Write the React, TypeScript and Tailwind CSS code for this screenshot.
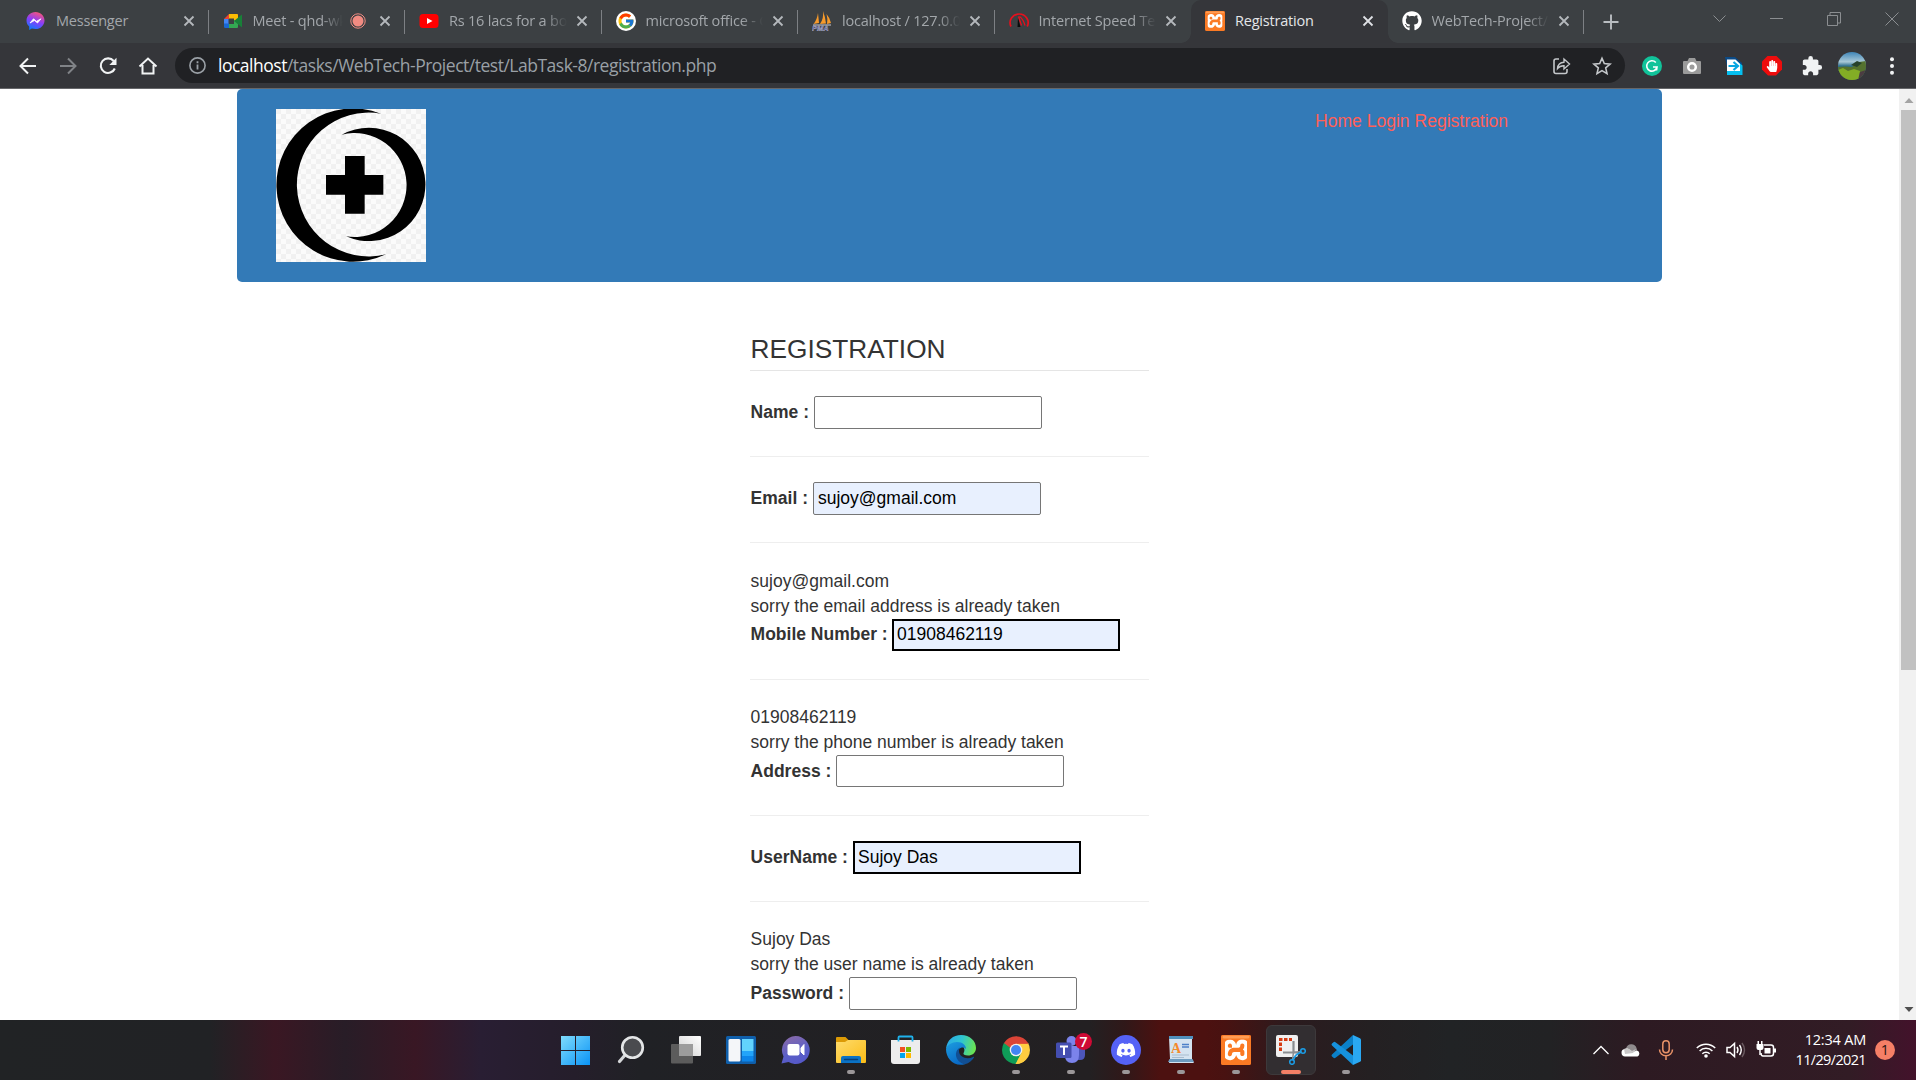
import React from "react";
import { FcGoogle } from "react-icons/fc";
import { SiXampp } from "react-icons/si";
import { FaDiscord, FaGithub, FaHandPaper } from "react-icons/fa";
import { MdExtension } from "react-icons/md";

type SvgProps = { w: number; h: number; vb?: string; className?: string; children: React.ReactNode };

function Svg({ w, h, vb, className, children }: SvgProps) {
  return (
    <svg width={w} height={h} viewBox={vb ?? `0 0 ${w} ${h}`} fill="none" className={"block shrink-0 " + (className ?? "")}>
      {children}
    </svg>
  );
}

function Messenger() {
  return (
    <Svg w={20} h={20}>
      <defs>
        <linearGradient id="msg" x1="0.3" y1="1" x2="0.7" y2="0">
          <stop offset="0" stopColor="#0a7cff" />
          <stop offset="0.5" stopColor="#8a3dfa" />
          <stop offset="1" stopColor="#fa5577" />
        </linearGradient>
      </defs>
      <path d="M9.500 1C4.500 1 0.500 4.700 0.500 9.500c0 2.500 1 4.600 2.700 6.100V19l2.600-1.400c1.200.3 2.400.5 3.700.5 5 0 9-3.800 9-8.600S14.500 1 9.500 1z" fill="url(#msg)" />
      <path d="M4 12 7.500 7.800l3 2.500 4.500-2.500L11.500 12l-3-2.500z" fill="#fff" stroke="#fff" strokeWidth="0.800" />
    </Svg>
  );
}

function Meet() {
  return (
    <Svg w={20} h={20}>
      <path d="M1 8l5-5v5z" fill="#ea4335" />
      <path d="M1 8h4.500v5H1z" fill="#4285f4" />
      <path d="M1 12.500h5V17H2.300Q1 17 1 15.700z" fill="#1967d2" />
      <path d="M6 3h8.200Q15 3 15 4v5l-4 2V7.500H6z" fill="#fbbc04" />
      <path d="M6 13h5V9l4 1.500V16q0 1-1 1H6z" fill="#34a853" />
      <path d="M11 10l7.500-6.200q.5-.3.500.5v11.400q0 .8-.6.400z" fill="#188038" />
    </Svg>
  );
}

function YouTube() {
  return (
    <Svg w={20} h={20}>
      <rect x="0.500" y="3" width="19" height="14" rx="3.500" fill="#f00" />
      <path d="M8 7l5.500 3L8 13z" fill="#fff" />
    </Svg>
  );
}

function PhpMyAdmin() {
  return (
    <Svg w={20} h={20}>
      <path d="M6 2q-1 7-4.500 11L7 12zM11 0q1 7-3 13l6-.5Q13 5 11 0zM14.500 3q1.500 5 .5 10l4-1q-1-5-4.500-9z" fill="#f79a2b" />
      <path d="M1 14h18" stroke="#c8c9d8" />
      <text x="0" y="20" fontSize="7.500" fontWeight="700" fontStyle="italic" fontFamily="Liberation Sans, sans-serif" fill="#4b4b8c" stroke="#c9c9dc" strokeWidth="0.350">PMA</text>
    </Svg>
  );
}

function Speed() {
  return (
    <Svg w={20} h={20}>
      <path d="M2 15.500A9 8.700 0 1 1 18.200 15.500" stroke="#e5101d" strokeWidth="1.700" />
      <path d="M9 6.500l2.500 9.500H8.500z" fill="#0c0c0c" />
      <path d="M9.500 5.500l3 9M10.500 5.500q4 3 5.500 9" stroke="#e5101d" strokeWidth="1.300" />
    </Svg>
  );
}

function Xampp({ size }: { size: number }) {
  return (
    <div className="relative shrink-0 overflow-hidden rounded-[2px] bg-[#fb7a24]">
      <Svg w={size} h={size} vb="0 0 30 30">
        <rect x="4" y="4.500" width="22" height="21.500" fill="#fff" />
      </Svg>
      <div className="absolute inset-0 flex scale-[1.14] items-center justify-center text-[#fb7a24]">
        <SiXampp size={size} />
      </div>
      <Svg w={size} h={size} vb="0 0 30 30" className="absolute inset-0">
        <rect x="1.500" y="0.800" width="27" height="2.600" rx="1.300" fill="#ff9d55" />
      </Svg>
    </div>
  );
}

function GoogleIcon() {
  return (
    <div className="flex size-5 items-center justify-center rounded-full bg-white">
      <FcGoogle size={18} />
    </div>
  );
}

function CloseX({ bright }: { bright?: boolean }) {
  return (
    <Svg w={12} h={12} className={bright ? "text-[#dfe1e5]" : "text-[#b4b8bc]"}>
      <path d="M1.500 1.500l9 9M10.500 1.500l-9 9" stroke="currentColor" strokeWidth="1.800" />
    </Svg>
  );
}

type Tab = { icon: React.ReactNode; title: string; active?: boolean; rec?: boolean; sep?: boolean };

const tabs: Tab[] = [
  { icon: <Messenger />, title: "Messenger", sep: true },
  { icon: <Meet />, title: "Meet - qhd-wkm", rec: true, sep: true },
  { icon: <YouTube />, title: "Rs 16 lacs for a box", sep: true },
  { icon: <GoogleIcon />, title: "microsoft office - G", sep: true },
  { icon: <PhpMyAdmin />, title: "localhost / 127.0.0.1", sep: true },
  { icon: <Speed />, title: "Internet Speed Test" },
  { icon: <Xampp size={20} />, title: "Registration", active: true },
  { icon: <FaGithub size={20} color="#fff" />, title: "WebTech-Project/re", sep: true },
];

function TabItem({ t }: { t: Tab }) {
  return (
    <div
      className={
        "relative flex h-[43px] w-[196.5px] shrink-0 items-center pr-[14px] pb-px pl-[14px] " +
        (t.active ? "rounded-t-[10px] bg-[#35363a] text-[#e4e6e9]" : "text-[#a3a7ab]")
      }
    >
      {t.active && (
        <>
          <div className="absolute bottom-0 -left-2.5 size-2.5 bg-[radial-gradient(circle_at_0_0,#3c4043_9.5px,#35363a_10px)]" />
          <div className="absolute -right-2.5 bottom-0 size-2.5 bg-[radial-gradient(circle_at_100%_0,#3c4043_9.5px,#35363a_10px)]" />
        </>
      )}
      <div className="w-5 shrink-0">{t.icon}</div>
      <div
        className={
          "mb-px ml-2.5 min-w-0 flex-1 overflow-hidden text-[14.500px] tracking-[-0.200px] whitespace-nowrap " +
          (t.title.length > 12 ? "[mask-image:linear-gradient(to_right,#000_calc(100%-22px),transparent)]" : "")
        }
      >
        {t.title}
      </div>
      {t.rec && (
        <Svg w={16} h={16} className="ml-[7px]">
          <circle cx="8" cy="8" r="7.200" stroke="#f28b82" />
          <circle cx="8" cy="8" r="5.500" fill="#f28b82" />
        </Svg>
      )}
      <div className={t.rec ? "ml-[13px]" : "ml-[9px]"}>
        <CloseX bright={t.active} />
      </div>
      {t.sep && <div className="absolute top-[10px] right-0 h-[24px] w-px bg-[#7d8084]" />}
    </div>
  );
}

function TabStrip() {
  return (
    <div className="flex h-[43px] bg-[#3c4043] pl-[12px]">
      {tabs.map((t) => (
        <TabItem key={t.title} t={t} />
      ))}
      <div className="flex w-[54px] items-center pl-[19px]">
        <Svg w={16} h={16}>
          <path d="M8 0.500v15M0.500 8h15" stroke="#b9bdc1" strokeWidth="1.900" />
        </Svg>
      </div>
      <div className="ml-auto flex h-[37px] items-center gap-[44px] pr-[17px] text-[#8b8e91]">
        <Svg w={13} h={13}>
          <path d="M0.500 3.500l6 6 6-6" stroke="currentColor" />
        </Svg>
        <Svg w={13} h={13}>
          <path d="M0 6.500h13" stroke="currentColor" />
        </Svg>
        <Svg w={14} h={14}>
          <path d="M0.500 3.500h10v10h-10zM3 3.500v-3h10.500v10.500h-3" stroke="currentColor" />
        </Svg>
        <Svg w={14} h={14}>
          <path d="M0.500 0.500l13 13M13.500 0.500l-13 13" stroke="currentColor" />
        </Svg>
      </div>
    </div>
  );
}

function Toolbar() {
  return (
    <div className="flex h-[46px] items-center border-b border-[#66676a] bg-[#35363a]">
      <div className="flex w-[175px] shrink-0 items-center gap-[20px] pl-[17.500px] text-[#f1f3f4]">
        <Svg w={20} h={20}>
          <path d="M18 10H3M10 2.500L2.500 10l7.500 7.500" stroke="currentColor" strokeWidth="2" />
        </Svg>
        <Svg w={20} h={20} className="text-[#808387]">
          <path d="M2 10h15M10 2.500l7.500 7.500-7.500 7.500" stroke="currentColor" strokeWidth="2" />
        </Svg>
        <Svg w={20} h={20}>
          <path d="M16.800 12.500A7.300 7.300 0 1 1 15.700 5" stroke="currentColor" strokeWidth="2.100" />
          <path d="M18.500 1.800v7.200h-7.200z" fill="currentColor" />
        </Svg>
        <Svg w={20} h={20}>
          <path d="M1.500 10.500L10 2.500l8.500 8M4.500 9v8.500h11V9" stroke="currentColor" strokeWidth="2" />
        </Svg>
      </div>
      <div className="flex h-[35px] w-[1450px] shrink-0 items-center rounded-full bg-[#202124] pr-[13px] pl-[13px]">
        <Svg w={19} h={19}>
          <circle cx="9.500" cy="9.500" r="7.600" stroke="#9aa0a6" strokeWidth="1.600" />
          <path d="M9.500 8.500v5M9.500 5.200v2" stroke="#9aa0a6" strokeWidth="1.800" />
        </Svg>
        <div className="mb-[2px] ml-[11px] text-[17.500px] leading-[24px] tracking-[-0.490px] whitespace-nowrap text-[#9aa0a6]">
          <span className="text-white">localhost</span>/tasks/WebTech-Project/test/LabTask-8/registration.php
        </div>
        <div className="ml-auto flex items-center gap-[21px] text-[#c4c7ca]">
          <Svg w={19} h={19}>
            <path d="M7 3H4Q2 3 2 5v10.500q0 2 2 2h9q2 0 2-2V13" stroke="currentColor" strokeWidth="1.600" />
            <path d="M5.500 12.500Q6 6.500 12 6.200V3l5.500 5-5.500 5V9.700Q8 9.500 5.500 12.500z" stroke="currentColor" strokeWidth="1.400" />
          </Svg>
          <Svg w={20} h={20}>
            <path d="M10 2.300l2.300 5.300 5.800.5-4.400 3.800 1.300 5.700-5-3-5 3 1.300-5.700L1.900 8.100l5.800-.5z" stroke="currentColor" strokeWidth="1.600" />
          </Svg>
        </div>
      </div>
      <div className="flex flex-1 items-center pl-[17px]">
        <Svg w={20} h={20}>
          <circle cx="10" cy="10" r="10" fill="#11c39a" />
          <path d="M13.800 6.500A5.200 5.200 0 1 0 15 11h-4M15 11l-.5 3.500" stroke="#fff" strokeWidth="1.600" />
        </Svg>
        <Svg w={20} h={20} className="ml-[20px]">
          <path d="M1 6q0-1 1-1h3.500L7 2h6l1.500 3H18q1 0 1 1v11q0 1-1 1H2q-1 0-1-1z" fill="#9b9b9b" />
          <circle cx="10" cy="11" r="3.800" stroke="#fff" strokeWidth="2.500" />
        </Svg>
        <Svg w={20} h={20} className="ml-[22px]">
          <path d="M1 1h10l7 6v9H4z" fill="#0b4a86" />
          <path d="M4 4.500h8l6.500 5V19H3v-4z" fill="#05bff0" />
          <path d="M3 3.500h8.500L16 8v7H3z" fill="#fff" />
          <path d="M4.500 10h8M9.500 6l4.500 4-4.500 4" stroke="#07a6e2" strokeWidth="2.200" />
        </Svg>
        <div className="ml-[18px] flex size-[20px] items-center justify-center bg-[#ee0c0c] [clip-path:polygon(30%_0,70%_0,100%_30%,100%_70%,70%_100%,30%_100%,0_70%,0_30%)]">
          <FaHandPaper size={12} color="#fff" />
        </div>
        <MdExtension size={22} color="#f1f3f4" className="ml-[19px]" />
        <Svg w={28} h={28} className="ml-[15px]">
          <defs>
            <clipPath id="avatar"><circle cx="14" cy="14" r="14" /></clipPath>
            <linearGradient id="sky" x1="0" y1="0" x2="0" y2="1">
              <stop offset="0" stopColor="#3f86b8" />
              <stop offset="0.350" stopColor="#a9c9d8" />
              <stop offset="0.500" stopColor="#2f6f8e" />
            </linearGradient>
          </defs>
          <g clipPath="url(#avatar)">
            <rect width="28" height="28" fill="url(#sky)" />
            <path d="M0 15q7-1 14 0l7-5 7-1v20H0z" fill="#55722f" />
            <path d="M0 18l5-2 5 3 6-2 6 2-1 9H2z" fill="#83ad25" />
            <path d="M13 13l6-4 5 2-5 4z" fill="#27422c" />
            <path d="M22 20l6-2v10h-8z" fill="#4b3c42" />
          </g>
        </Svg>
        <Svg w={6} h={20} className="ml-[23px]">
          <g fill="#f1f3f4">
            <circle cx="3" cy="3.200" r="2" />
            <circle cx="3" cy="10" r="2" />
            <circle cx="3" cy="16.800" r="2" />
          </g>
        </Svg>
      </div>
    </div>
  );
}

function Logo() {
  return (
    <svg width="150" height="153" viewBox="0 0 450 459" className="block">
      <defs>
        <pattern id="checks" width="30" height="30" patternUnits="userSpaceOnUse">
          <rect width="30" height="30" fill="#fbfbfb" />
          <rect width="15" height="15" fill="#f1f1f1" />
          <rect x="15" y="15" width="15" height="15" fill="#f1f1f1" />
        </pattern>
      </defs>
      <rect width="450" height="459" fill="url(#checks)" />
      <path d="M315 14A230 230 0 1 0 330 436A215.700 215.700 0 1 1 315 14z" />
      <path d="M197 77A170 170 0 1 1 210 382A156 156 0 1 0 197 77z" />
      <path d="M207 141h59v57h56v59h-56v57h-59v-57h-57v-59h57z" />
    </svg>
  );
}

type FieldProps = { label: string; value?: string; size: "tall" | "short"; filled?: boolean; thick?: boolean; labelWidth: string };

function Field({ label, value, size, filled, thick, labelWidth }: FieldProps) {
  return (
    <div className={"flex " + (size === "tall" ? "h-[33px]" : "h-[32px]")}>
      <label className={"shrink-0 pl-[0.600px] leading-[25px] font-bold whitespace-nowrap " + (size === "short" && thick ? "pt-[3px] " : "pt-[4px] ") + labelWidth}>
        {label} :
      </label>
      <input
        readOnly
        value={value ?? ""}
        className={
          "block h-full w-[228px] text-black outline-none " +
          (size === "short" ? "pb-[2px] " : "pb-0 ") +
          (thick ? "border-2 border-black pl-[3px] " : "rounded-[2px] border border-[#767676] pl-[4px] ") +
          (filled ? "bg-[#e8f0fe]" : "bg-white")
        }
      />
    </div>
  );
}

function Rule({ gap }: { gap: string }) {
  return <div className={"mb-[25px] h-px bg-[#eeeeee] " + gap} />;
}

function Message({ value, text, pad }: { value: string; text: string; pad?: string }) {
  return (
    <div className={"pl-[0.600px] leading-[25px] " + (pad ?? "h-[50px]")}>
      <p>{value}</p>
      <p>{text}</p>
    </div>
  );
}

function Page() {
  return (
    <div className="flex h-[931px] overflow-hidden bg-white font-['Liberation_Sans',Arial,sans-serif] text-[17.500px] text-[#333]">
      <div className="w-[1899px] shrink-0 overflow-hidden">
        <header className="ml-[237px] flex h-[193px] w-[1425px] justify-between rounded-[5px] bg-[#337ab7] pt-[20px] pr-[154px] pl-[39px]">
          <Logo />
          <nav className="flex gap-[5px] leading-[25px] text-[#ff6058]">
            <a>Home</a>
            <a>Login</a>
            <a>Registration</a>
          </nav>
        </header>
        <form className="mt-[48px] ml-[750px] w-[399px]">
          <h1 className="mb-[25px] h-[41px] border-b border-[#e5e5e5] pt-px pl-[0.600px] text-[26.250px] leading-[37px]">REGISTRATION</h1>
          <Field label="Name" size="tall" labelWidth="w-[64px]" />
          <Rule gap="mt-[27px]" />
          <Field label="Email" value="sujoy@gmail.com" size="tall" filled labelWidth="w-[63px]" />
          <Rule gap="mt-[27px]" />
          <Message value="sujoy@gmail.com" text="sorry the email address is already taken" pad="h-[51px] pt-px" />
          <Field label="Mobile Number" value="01908462119" size="short" filled thick labelWidth="w-[142px]" />
          <Rule gap="mt-[28px]" />
          <Message value="01908462119" text="sorry the phone number is already taken" />
          <Field label="Address" size="short" labelWidth="w-[86px]" />
          <Rule gap="mt-[28px]" />
          <Field label="UserName" value="Sujoy Das" size="tall" filled thick labelWidth="w-[103px]" />
          <Rule gap="mt-[27px]" />
          <Message value="Sujoy Das" text="sorry the user name is already taken" />
          <Field label="Password" size="tall" labelWidth="w-[99px]" />
        </form>
      </div>
      <div className="flex w-[17px] shrink-0 flex-col items-center bg-[#f1f1f1]">
        <Svg w={17} h={21}>
          <path d="M5.500 14l4.500-5 4.500 5z" fill="#a3a3a3" />
        </Svg>
        <div className="ml-[2px] h-[560px] w-[15px] bg-[#c1c1c1]" />
        <Svg w={17} h={21} className="mt-auto">
          <path d="M5.500 8l4.500 5 4.500-5z" fill="#505050" />
        </Svg>
      </div>
    </div>
  );
}

const appIcons: { name: string; state?: "open" | "active"; icon: React.ReactNode }[] = [
  {
    name: "start",
    icon: (
      <Svg w={29} h={29}>
        <defs>
          <linearGradient id="win" x1="0" y1="0" x2="1" y2="1">
            <stop offset="0" stopColor="#7fdcfd" />
            <stop offset="1" stopColor="#0a93f5" />
          </linearGradient>
        </defs>
        <path d="M0 0h14v14H0zM15 0h14v14H15zM0 15h14v14H0zM15 15h14v14H15z" fill="url(#win)" />
      </Svg>
    ),
  },
  {
    name: "search",
    icon: (
      <Svg w={30} h={30}>
        <path d="M9.500 19.500L3.500 26.500" stroke="#d5d7d9" strokeWidth="3.200" strokeLinecap="round" />
        <circle cx="16.500" cy="12.500" r="10.300" fill="#4a4b4f" stroke="#e4e6e7" strokeWidth="2.600" />
      </Svg>
    ),
  },
  {
    name: "task view",
    icon: (
      <Svg w={30} h={30}>
        <defs>
          <linearGradient id="tv" x1="1" y1="0" x2="0" y2="1">
            <stop offset="0" stopColor="#fff" />
            <stop offset="1" stopColor="#d0d0d0" />
          </linearGradient>
        </defs>
        <rect x="8" y="1" width="22" height="20" rx="1" fill="url(#tv)" />
        <rect x="0" y="9" width="22" height="19.500" rx="1" fill="#5c5c5c" />
        <rect x="8" y="9" width="14" height="12" fill="#9c9c9c" />
      </Svg>
    ),
  },
  {
    name: "widgets",
    icon: (
      <Svg w={30} h={30}>
        <rect y="1" width="30" height="28" rx="1.500" fill="#0f5fab" />
        <rect x="2.500" y="4" width="12" height="22.500" rx="1.500" fill="#f4f6f9" />
        <rect x="16" y="4" width="11.500" height="12" fill="#62d3fd" />
        <rect x="16" y="16" width="11.500" height="5" fill="#22a4fa" />
        <rect x="16" y="21" width="11.500" height="5.500" fill="#0c85ea" />
      </Svg>
    ),
  },
  {
    name: "chat",
    icon: (
      <Svg w={30} h={30}>
        <defs>
          <linearGradient id="chat" x1="0.200" y1="0" x2="0.600" y2="1">
            <stop offset="0" stopColor="#8a6aa8" />
            <stop offset="0.600" stopColor="#5b5fc7" />
            <stop offset="1" stopColor="#5558c9" />
          </linearGradient>
        </defs>
        <path d="M14.500 1a14 14 0 1 1-7 26l-7 1.500 2-7A14 14 0 0 1 14.500 1z" fill="url(#chat)" />
        <rect x="6.500" y="9" width="12" height="11.500" rx="2" fill="#fff" />
        <path d="M20 13l3-3.500v10.500l-3-3z" fill="#fff" stroke="#fff" />
      </Svg>
    ),
  },
  {
    name: "explorer",
    state: "open",
    icon: (
      <Svg w={30} h={30}>
        <defs>
          <linearGradient id="fold" x1="0" y1="0" x2="1" y2="1">
            <stop offset="0" stopColor="#fedb6c" />
            <stop offset="1" stopColor="#fbbc16" />
          </linearGradient>
        </defs>
        <path d="M0 3q0-1 1-1h8.500l3 3H12v5H0z" fill="#dc9a05" />
        <path d="M0 7h9l3-2h17q1 0 1 1v21q0 1-1 1H1q-1 0-1-1z" fill="url(#fold)" />
        <path d="M5 28v-5q0-2 2-2h16q2 0 2 2v5z" fill="#0b72c4" />
        <path d="M8.500 24.500h13" stroke="#063f78" strokeWidth="1.300" strokeLinecap="round" />
      </Svg>
    ),
  },
  {
    name: "store",
    icon: (
      <Svg w={30} h={30}>
        <path d="M0 5h29v21q0 3-3 3H3q-3 0-3-3z" fill="#ededed" />
        <path d="M7.500 6.500V2.500Q7.500 1.500 8.500 1.500h12Q21.500 1.500 21.500 2.500V6.500" stroke="#1fb2ec" strokeWidth="1.800" />
        <path d="M9 12h5v5H9z" fill="#f25022" />
        <path d="M15 12h5v5h-5z" fill="#7fba00" />
        <path d="M9 18h5v5H9z" fill="#00a4ef" />
        <path d="M15 18h5v5h-5z" fill="#ffb900" />
      </Svg>
    ),
  },
  {
    name: "edge",
    icon: (
      <Svg w={30} h={30}>
        <defs>
          <linearGradient id="edgeA" x1="0" y1="0.300" x2="1" y2="0.500">
            <stop offset="0" stopColor="#2aa9e8" />
            <stop offset="0.500" stopColor="#2fc5cf" />
            <stop offset="1" stopColor="#6be34f" />
          </linearGradient>
          <linearGradient id="edgeB" x1="0" y1="0" x2="0.500" y2="1">
            <stop offset="0" stopColor="#1c9de0" />
            <stop offset="1" stopColor="#0a6ac6" />
          </linearGradient>
        </defs>
        <path d="M0 14C1 5 7 0 15 0c9 0 15 6 15 13 0 5-4 7.500-8 7.500-3.500 0-5-1.200-4.500-2.300 2-3 1-8-5-9C6 8.500 1 12 0 14z" fill="url(#edgeA)" />
        <path d="M0 14c1-4 6-7 11-7 6 0 9 3.500 9 7-2-3-9-2-9 5 0 5 4 9 8 10.200C8 32 0 24 0 14z" fill="url(#edgeB)" />
        <path d="M14 12.500c-6 3-6 14 5 16.800 4-1 7.500-4 9-6.800.3-.8-.3-1-1-.6-6 3.100-14 .1-14-5.900 0-1.500.5-2.800 1-3.500z" fill="#114f94" />
      </Svg>
    ),
  },
  {
    name: "chrome",
    state: "open",
    icon: (
      <Svg w={28} h={28} vb="0 0 28 28">
        <path d="M14 14L2 7A14 14 0 0 1 26.100 7z" fill="#db4437" />
        <path d="M14 14L26.100 7A14 14 0 0 1 14 28z" fill="#ffcd40" />
        <path d="M14 14V28A14 14 0 0 1 1.900 7z" fill="#0f9d58" />
        <path d="M14 7.600h12.400L20 18z" fill="#ffcd40" />
        <path d="M1.900 7L8.500 17.500 14 8z" fill="#0f9d58" />
        <path d="M1.900 7h24.200v.7H14L8.500 12z" fill="#db4437" />
        <path d="M19.500 17L14 28 8.500 17.500z" fill="#0f9d58" />
        <path d="M19.500 17L13.500 28q6 0 9.500-3.500z" fill="#ffcd40" />
        <circle cx="14" cy="14" r="6.300" fill="#f1f1f1" />
        <circle cx="14" cy="14" r="5" fill="#4285f4" />
      </Svg>
    ),
  },
  {
    name: "teams",
    state: "open",
    icon: (
      <div className="relative">
        <Svg w={30} h={30}>
          <circle cx="15.500" cy="6" r="5" fill="#7b83eb" />
          <path d="M20 11h9v9q0 5-5 5h-4z" fill="#4c56bb" />
          <path d="M9 11h14v9q0 8-7 8t-7-8z" fill="#7b83eb" />
          <rect y="7.500" width="15.500" height="15.500" rx="1.500" fill="#444eb0" />
          <path d="M4 11.500h8M8 11.500v8.500" stroke="#fff" strokeWidth="2" />
        </Svg>
        <div className="absolute -top-[2px] left-[19.500px] flex size-[17px] items-center justify-center rounded-full bg-[#cf0a35] text-[14px] leading-none font-semibold text-white">7</div>
      </div>
    ),
  },
  {
    name: "discord",
    state: "open",
    icon: (
      <div className="flex size-[30px] items-center justify-center rounded-full bg-[#5562f6]">
        <FaDiscord size={20} color="#fff" />
      </div>
    ),
  },
  {
    name: "wordpad",
    state: "open",
    icon: (
      <Svg w={26} h={30}>
        <path d="M1 2h23v23l2 3H1l1-4z" fill="#d4e3f0" />
        <path d="M1 1h24v3H1z" fill="#4f90bd" />
        <path d="M0 27h26l-1.500-3H1.500z" fill="#6d9cc0" />
        <text x="3" y="17.500" fontSize="14" fontWeight="700" fontFamily="Liberation Serif, serif" fill="#f58a2a">A</text>
        <path d="M14 9.500h7M14 12h7" stroke="#4c80c8" strokeWidth="1.600" />
        <path d="M4 20h17M4 22.500h12" stroke="#a9bccf" />
      </Svg>
    ),
  },
  { name: "xampp", state: "open", icon: <Xampp size={30} /> },
  {
    name: "snip",
    state: "active",
    icon: (
      <Svg w={30} h={30}>
        <rect y="0" width="22" height="22" rx="2" fill="#f0f0f0" />
        <path d="M4.500 16V4.500H16" stroke="#d53a12" strokeWidth="3" strokeDasharray="3.500 1.500" />
        <path d="M17.500 6v11.500M7 17.500h15" stroke="#8a8d90" strokeWidth="2.200" />
        <path d="M17.500 17l-1 8M17.500 17.500l8-1" stroke="#8a8d90" strokeWidth="1.500" />
        <circle cx="27" cy="16" r="2.300" stroke="#1b9ee8" strokeWidth="1.500" />
        <circle cx="16" cy="27" r="2.300" stroke="#1b9ee8" strokeWidth="1.500" />
        <path d="M20 20l5-3M20 20l-3 5" stroke="#1b9ee8" strokeWidth="1.800" />
      </Svg>
    ),
  },
  {
    name: "vscode",
    state: "open",
    icon: (
      <Svg w={30} h={30}>
        <path d="M22 0L1 19.500q-1 1 0 2l1.500 1.300q.8.700 2 0L22 9.500z" fill="#0b80c8" />
        <path d="M22 30L1 10.500q-1-1 0-2l1.500-1.300q.8-.7 2 0L22 20.500z" fill="#1691dc" />
        <path d="M22 0l7 3.200q1 .5 1 1.500v20.600q0 1-1 1.500L22 30z" fill="#2aa8f2" />
      </Svg>
    ),
  },
];

function Taskbar() {
  return (
    <div className="flex h-[60px] items-center justify-between bg-[linear-gradient(90deg,#212325_0px,#212225_210px,#3a1723_275px,#281d27_345px,#391724_415px,#291e33_480px,#251e2b_575px,#202125_640px,#232022_1090px,#301819_1125px,#4c1110_1160px,#4c1110_1205px,#481211_1225px,#2b1b1e_1290px,#242022_1370px,#212325_1450px,#222224_1550px,#2d1a22_1640px,#321c25_1850px,#43122b_1916px)]">
      <div className="flex h-full pl-[548px]">
        {appIcons.map((a) => (
          <div key={a.name} className="flex h-full w-[55px] items-center justify-center">
            <div
              className={
                "relative flex size-[50px] items-center justify-center rounded-[6px] " +
                (a.state === "active" ? "border border-[#3d393b] bg-[#322e31]" : "")
              }
            >
              {a.icon}
              {a.state === "open" && <div className="absolute bottom-px left-[21px] h-[4px] w-[8px] rounded-full bg-[#9b9799]" />}
              {a.state === "active" && <div className="absolute bottom-0 left-[14px] h-[4px] w-[20px] rounded-full bg-[#f47f66]" />}
            </div>
          </div>
        ))}
      </div>
      <div className="flex items-center pr-[21px] text-white">
        <Svg w={18} h={10}>
          <path d="M1.500 9L9 1.500 16.500 9" stroke="currentColor" strokeWidth="1.300" />
        </Svg>
        <Svg w={20} h={14} className="ml-[11px]">
          <path d="M5 5.500a5.500 5.500 0 0 1 10.500-.5q1 1 0 4H3z" fill="#8f8a8c" />
          <path d="M4 13.500a3.800 3.800 0 0 1-.5-7.500l3-.5 5.500 3.500 4-1.500a3.200 3.200 0 0 1 .5 6z" fill="#fff" />
          <path d="M3 6q4-2 8 2l4-2-3 4-8 1z" fill="#c9c7c8" />
        </Svg>
        <Svg w={16} h={20} className="ml-[17px] text-[#e99268]">
          <rect x="4.800" y="0.800" width="6.400" height="12" rx="3.200" stroke="currentColor" strokeWidth="1.500" />
          <path d="M1.500 9.500a6.500 6.300 0 0 0 13 0M8 16v4" stroke="currentColor" strokeWidth="1.500" />
        </Svg>
        <Svg w={20} h={16} className="ml-[22px]">
          <path d="M0.800 6a13 13 0 0 1 18.400 0M3.600 9a9 9 0 0 1 12.800 0M6.300 11.800a5.200 5.200 0 0 1 7.400 0" stroke="currentColor" strokeWidth="1.500" />
          <circle cx="10" cy="14" r="1.800" fill="currentColor" />
        </Svg>
        <Svg w={20} h={18} className="ml-[10px]">
          <path d="M1 6.500h3l4.500-4v13l-4.500-4H1z" stroke="currentColor" strokeWidth="1.500" />
          <path d="M11 6q2 3 0 6M13.500 4q3.500 5 0 10" stroke="currentColor" strokeWidth="1.400" />
          <path d="M16 2q5 7 0 14" stroke="#6b5b61" strokeWidth="1.400" />
        </Svg>
        <Svg w={20} h={18} className="ml-[10px]">
          <path d="M8 4h7q2.500 0 2.500 2.500v6Q17.500 15 15 15H7q-2 0-2-3" stroke="currentColor" strokeWidth="1.500" />
          <path d="M8.500 7h6v5.500h-6zM18 7.500h2v4h-2zM0.500 3h7v4q0 2-2 2h-3q-2 0-2-2zM1.500 0h1.500v3H1.500zM5 0h1.500v3H5z" fill="currentColor" />
          <path d="M4 9v5" stroke="currentColor" strokeWidth="1.500" />
        </Svg>
        <div className="w-[90px] text-right text-[14.500px] leading-[20px]">
          <p className="tracking-[-0.200px]">12:34 AM</p>
          <p className="tracking-[-0.650px]">11/29/2021</p>
        </div>
        <div className="ml-[9px] flex size-[20px] items-center justify-center rounded-full bg-[#f57f66] text-[14.500px] leading-none text-[#2a1512]">1</div>
      </div>
    </div>
  );
}

export default function App() {
  return (
    <div className="h-[1080px] w-[1916px] overflow-hidden font-['Open_Sans','Noto_Sans',sans-serif]">
      <TabStrip />
      <Toolbar />
      <Page />
      <Taskbar />
    </div>
  );
}
